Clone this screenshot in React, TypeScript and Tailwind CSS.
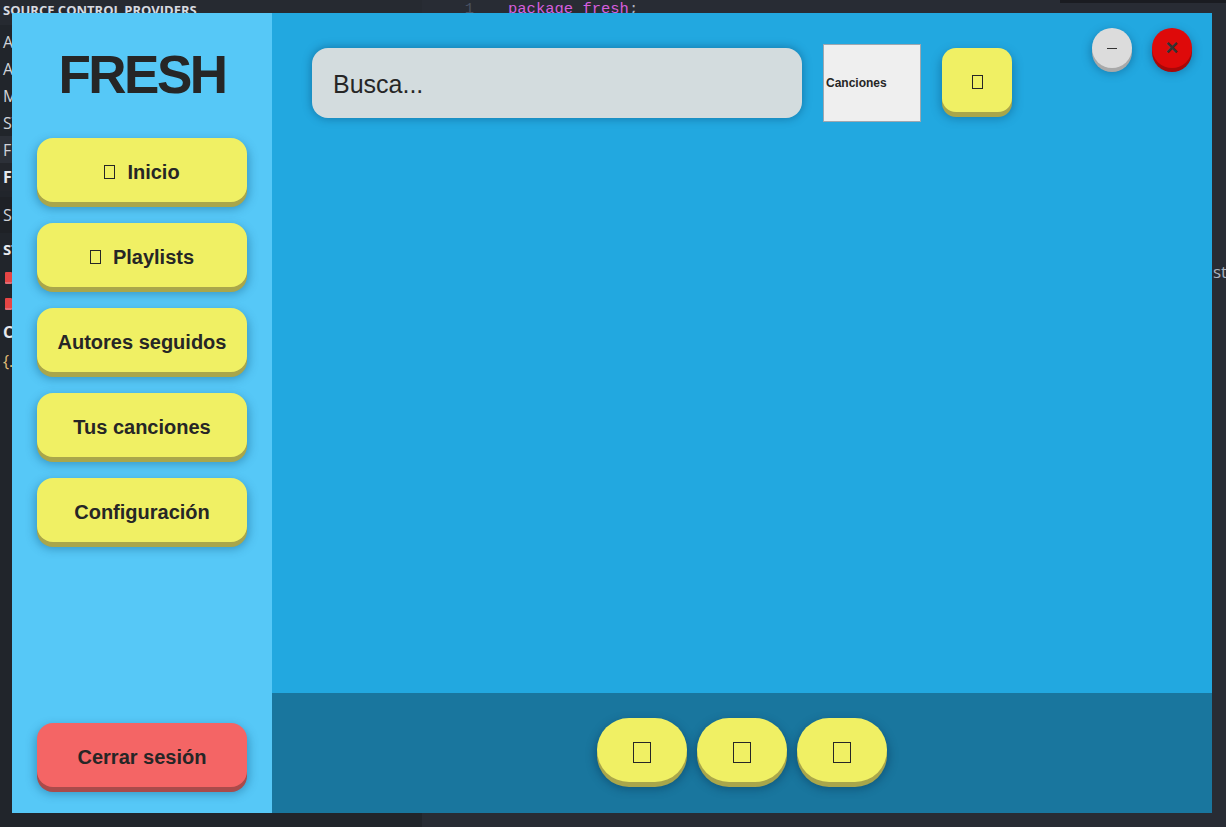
import React from 'react'

function Tofu({ w, h }: { w: number; h: number }) {
  // caja de glifo que falta, como en la captura
  return (
    <span
      className="inline-block border-[1.5px] border-[#262626]"
      style={{ width: w, height: h }}
    />
  )
}

function SideButton({
  label,
  icon,
  red,
}: {
  label: string
  icon?: boolean
  red?: boolean
}) {
  return (
    <button
      className={
        red
          ? 'flex h-[64px] w-[210px] items-center justify-center gap-3 rounded-[16px] bg-[#f46565] pt-[4px] text-[20px] font-bold text-[#262626] shadow-[0_5px_0_#a94b4b,0_5px_10px_2px_rgba(0,60,100,0.35)]'
          : 'flex h-[64px] w-[210px] items-center justify-center gap-3 rounded-[16px] bg-[#f0f064] pt-[4px] text-[20px] font-bold text-[#262626] shadow-[0_5px_0_#a9a64b,0_5px_10px_2px_rgba(0,60,100,0.35)]'
      }
    >
      {icon ? <Tofu w={11} h={14} /> : null}
      <span>{label}</span>
    </button>
  )
}

function IdeBackdrop() {
  const rows = [
    { t: 'Az', cls: 'h-[27px] text-[#d0d3d9]' },
    { t: 'AW', cls: 'h-[27px] text-[#d0d3d9]' },
    { t: 'Me', cls: 'h-[27px] text-[#d0d3d9]' },
    { t: 'SV', cls: 'h-[27px] text-[#d0d3d9]' },
    { t: 'Fr', cls: 'h-[27px] bg-[#2c3038] text-[#d0d3d9]' },
    { t: 'FI', cls: 'h-[28px] bg-[#23262c] font-bold text-[#e6e8ec]' },
  ]
  return (
    <div className="absolute inset-0 flex" style={{ fontFamily: '"Open Sans", "Noto Sans", sans-serif' }}>
      {/* barra lateral del IDE: solo asoma la cabecera y una franja de 12px */}
      <div className="flex w-[422px] flex-col bg-[#21252b]">
        <div className="flex h-[25px] items-start whitespace-nowrap bg-[#262a31] pl-[3px] pt-[1px] text-[13px] font-bold leading-[18px] text-[#d7dae0]">
          SOURCE CONTROL PROVIDERS
        </div>
        <div className="flex w-[12px] flex-col overflow-hidden whitespace-nowrap">
          <div className="h-[3px]" />
          {rows.map((r) => (
            <div key={r.t} className={`flex items-center pl-[3px] text-[16px] ${r.cls}`}>
              {r.t}
            </div>
          ))}
          <div className="h-[6px]" />
          <div className="flex h-[36px] items-center bg-[#1e2126] pl-[3px] text-[16px] text-[#d0d3d9]">Se</div>
          <div className="flex h-[32px] items-center pl-[3px] text-[15px] font-bold text-[#e6e8ec]">ST</div>
          <div className="flex h-[26px] items-center pl-[5px]">
            <span className="h-[12px] w-[9px] rounded-[1px] border-b-2 border-[#e06c75] bg-[#e64545]" />
          </div>
          <div className="flex h-[26px] items-center pl-[5px]">
            <span className="h-[12px] w-[9px] rounded-[1px] border-b-2 border-[#e06c75] bg-[#e64545]" />
          </div>
          <div className="flex h-[30px] items-center pl-[3px] text-[16px] font-bold text-[#e6e8ec]">CO</div>
          <div className="flex h-[27px] items-center pl-[3px] text-[16px] text-[#e5c07b]">{'{…'}</div>
        </div>
      </div>
      {/* editor */}
      <div className="relative flex-1 bg-[#282c34]" style={{ fontFamily: '"Liberation Mono", monospace' }}>
        <div className="flex h-[20px] items-center text-[15.5px] leading-none">
          <span className="w-[52px] text-right text-[#495162]">1</span>
          <span className="ml-[34px] text-[#d55fde]">package fresh</span>
          <span className="text-[#abb2bf]">;</span>
        </div>
        <div
          className="absolute left-[791px] top-[259px] text-[17px] text-[#abb2bf]"
          style={{ fontFamily: '"Open Sans", "Noto Sans", sans-serif' }}
        >
          st
        </div>
      </div>
      <div className="absolute right-0 top-0 h-[3px] w-[166px] bg-[#1a1c21]" />
    </div>
  )
}

export default function App() {
  const nav = ['Inicio', 'Playlists', 'Autores seguidos', 'Tus canciones', 'Configuración']

  return (
    <div className="relative h-[827px] w-[1226px] overflow-hidden bg-[#282c34]">
      <IdeBackdrop />

      {/* ventana de la app */}
      <div
        className="absolute left-[12px] top-[13px] flex h-[800px] w-[1200px]"
        style={{ fontFamily: '"Liberation Sans", Arial, sans-serif' }}
      >
        {/* Columna izquierda */}
        <aside className="flex w-[260px] flex-col items-center bg-[#56c8f7] pt-[35px]">
          <h1 className="mb-[37px] text-[53px] font-bold leading-none tracking-[-2.5px] text-[#262626]">FRESH</h1>
          <div className="flex flex-col gap-[21px]">
            {nav.map((n, i) => (
              <SideButton key={n} label={n} icon={i < 2} />
            ))}
          </div>
          <div className="mb-[26px] mt-auto">
            <SideButton label="Cerrar sesión" red />
          </div>
        </aside>

        {/* Contenido */}
        <main className="flex flex-1 flex-col">
          <div className="relative flex-1 bg-[#22a8e0]">
            <div className="flex items-start gap-[21px] pl-[40px] pt-[31px]">
              <div className="mt-[4px] flex h-[70px] w-[490px] items-center rounded-[16px] bg-[#d3dcde] pl-[21px] pt-[4px] text-[25px] text-[#262626] shadow-[0_0_8px_1px_rgba(0,60,100,0.4)]">
                Busca...
              </div>
              <div className="flex h-[78px] w-[98px] items-center border border-[#9ea7b0] bg-[#efefef] pl-[2px] text-[12px] font-bold text-[#262626]">
                Canciones
              </div>
              <button className="mt-[4px] flex h-[64px] w-[70px] items-center justify-center rounded-[14px] bg-[#f0f064] pt-[4px] shadow-[0_5px_0_#a9a64b,0_5px_10px_2px_rgba(0,60,100,0.35)]">
                <Tofu w={11} h={14} />
              </button>
            </div>

            {/* botones de ventana */}
            <div className="absolute right-[20px] top-[15px] flex gap-[20px]">
              <button className="flex h-[40px] w-[40px] items-center justify-center rounded-full bg-[#dcdcdc] shadow-[0_4px_0_#a9a9a9,0_4px_8px_2px_rgba(0,60,100,0.35)]">
                <span className="h-[1px] w-[10px] bg-[#333]" />
              </button>
              <button className="flex h-[40px] w-[40px] items-center justify-center rounded-full bg-[#de0a0a] pb-[1px] text-[22px] font-black leading-none text-[#333] shadow-[0_4px_0_#a80808,0_4px_8px_2px_rgba(0,60,100,0.35)]">
                ×
              </button>
            </div>
          </div>

          {/* barra inferior */}
          <div className="flex h-[120px] justify-center gap-[10px] bg-[#19769e] pt-[25px]">
            {[0, 1, 2].map((i) => (
              <button
                key={i}
                className="flex h-[64px] w-[90px] items-center justify-center rounded-[32px] bg-[#f0f064] pt-[4px] shadow-[0_5px_0_#a9a64b,0_5px_10px_2px_rgba(0,40,70,0.4)]"
              >
                <Tofu w={18} h={21} />
              </button>
            ))}
          </div>
        </main>
      </div>
    </div>
  )
}
